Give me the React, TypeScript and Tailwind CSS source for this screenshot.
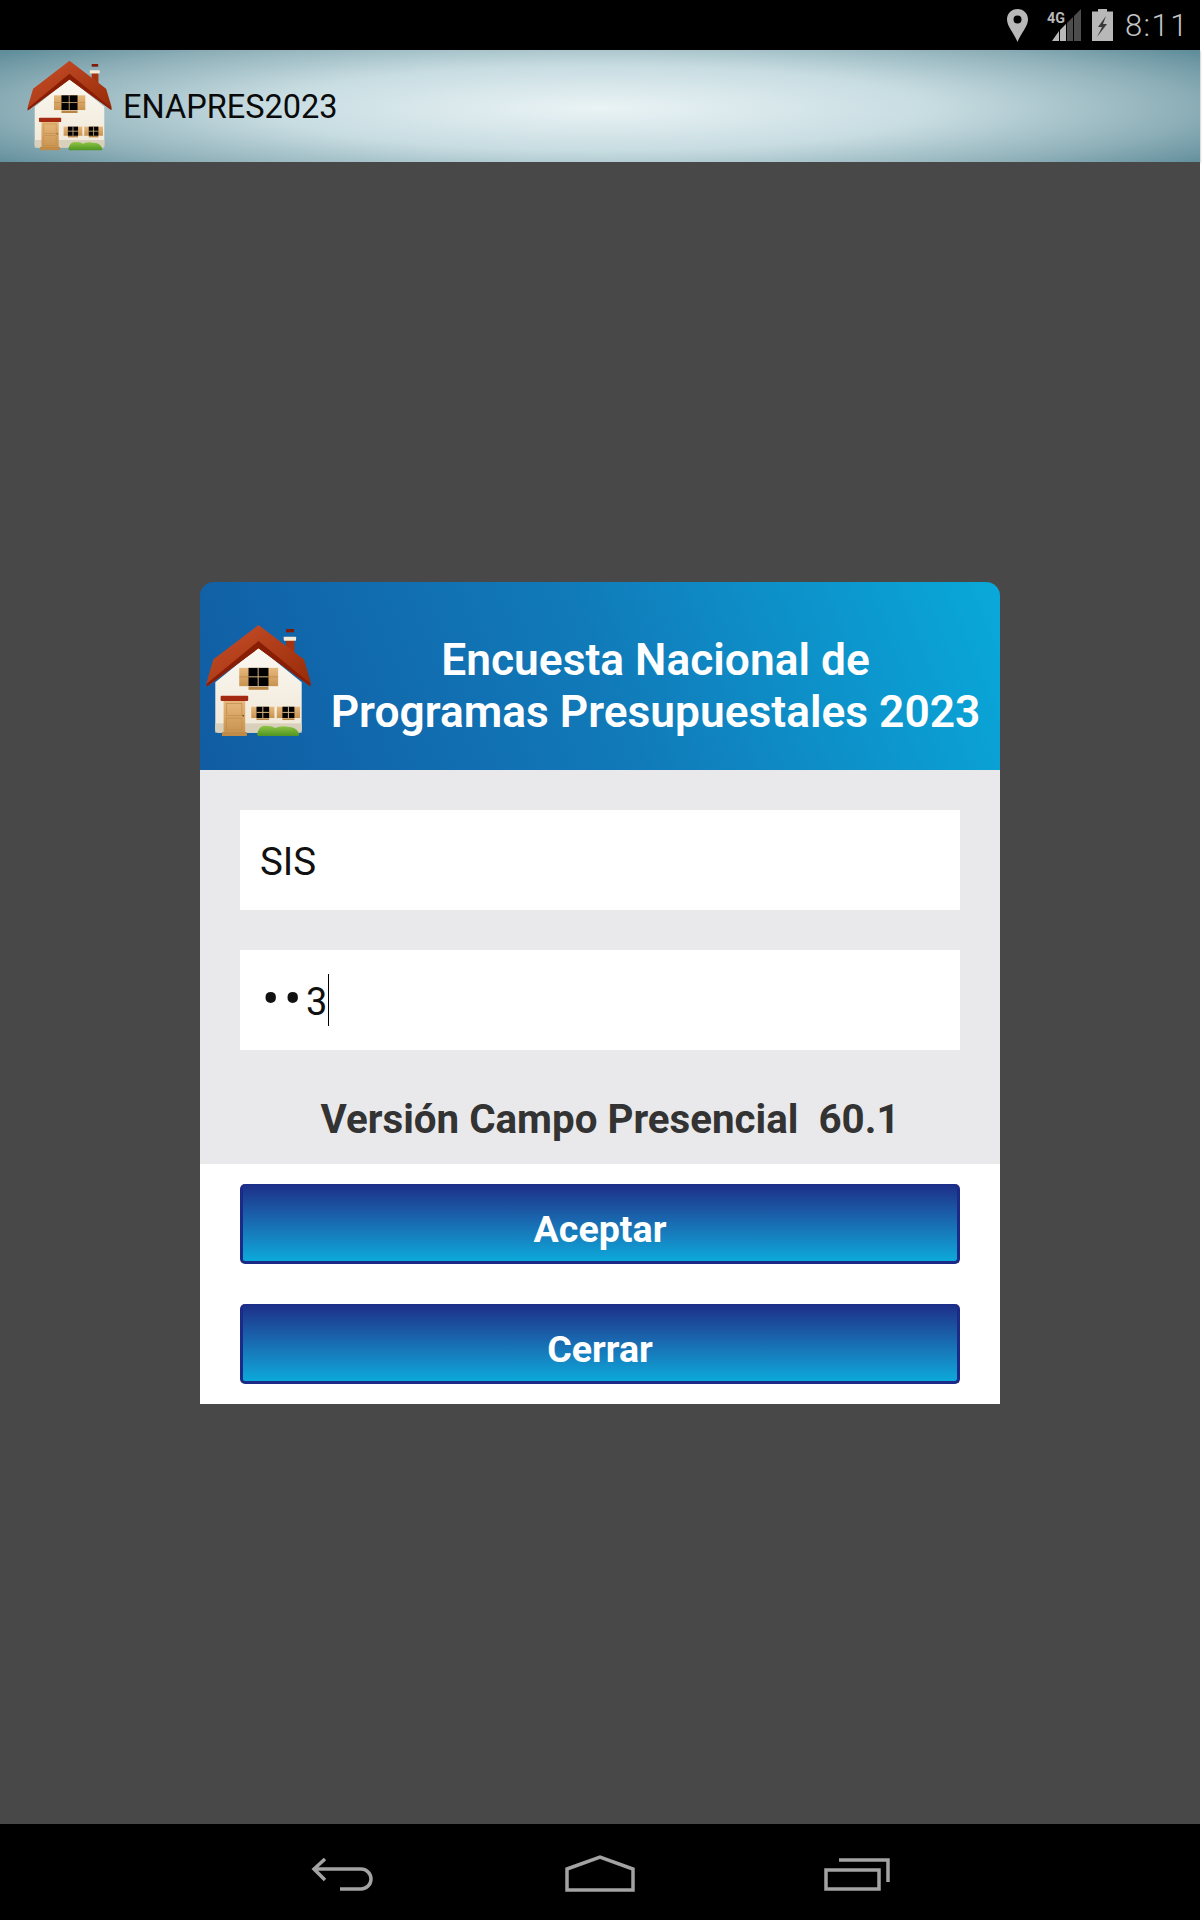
function House({ className }: { className: string }) {
  return (
    <svg viewBox="50 165 316 340" className={className}>
      <defs>
        <linearGradient id="roof" x1="0" y1="0" x2="1" y2="1">
          <stop offset="0" stopColor="#c9502a" />
          <stop offset="1" stopColor="#962a08" />
        </linearGradient>
        <linearGradient id="wall" x1="0" y1="0" x2="0" y2="1">
          <stop offset="0" stopColor="#fbf8f1" />
          <stop offset="1" stopColor="#f0e8d8" />
        </linearGradient>
        <linearGradient id="wood" x1="0" y1="0" x2="0" y2="1">
          <stop offset="0" stopColor="#e6b87c" />
          <stop offset="1" stopColor="#c99350" />
        </linearGradient>
        <linearGradient id="bush" x1="0" y1="0" x2="0" y2="1">
          <stop offset="0" stopColor="#8fc544" />
          <stop offset="1" stopColor="#4f9422" />
        </linearGradient>
      </defs>
      <rect x="291" y="210" width="25" height="50" fill="#a5330f" />
      <rect x="291" y="180" width="24" height="10" fill="#7f1c08" />
      <rect x="284" y="203" width="37" height="12" rx="2" fill="#f5ecd8" />
      <path d="M78 340 L208 235 L338 340 V482 Q338 492 328 492 H88 Q78 492 78 482 Z" fill="url(#wall)" />
      <rect x="78" y="464" width="260" height="28" fill="#d9d0bc" />
      <path d="M52 340 L72 272 L208 168 L345 272 L365 340 L364 352 L208 238 L52 354 Z" fill="url(#roof)" />
      <path d="M52 345 L208 216 L365 345 L364 352 L208 238 L52 354 Z" fill="#8a1e05" />
      <rect x="150" y="297" width="117" height="55" fill="url(#wood)" />
      <path d="M150 324 H178 M238 324 H267" stroke="#b98544" strokeWidth="2" />
      <rect x="178" y="297" width="60" height="55" fill="#000" />
      <path d="M207 297 V352 M178 324 H238" stroke="#d8b684" strokeWidth="3" />
      <rect x="178" y="354" width="60" height="9" fill="#b98544" />
      <rect x="186" y="414" width="147" height="34" fill="url(#wood)" />
      <rect x="256" y="414" width="7" height="34" fill="url(#wall)" />
      <rect x="202" y="414" width="38" height="34" fill="#000" />
      <path d="M221 414 V448 M202 431 H240" stroke="#d8b684" strokeWidth="3" />
      <rect x="280" y="414" width="36" height="34" fill="#000" />
      <path d="M298 414 V448 M280 431 H316" stroke="#d8b684" strokeWidth="3" />
      <rect x="202" y="449" width="38" height="5" fill="#b98544" />
      <rect x="280" y="449" width="36" height="5" fill="#b98544" />
      <rect x="103" y="396" width="65" height="96" fill="url(#wood)" />
      <rect x="112" y="404" width="46" height="36" fill="none" stroke="#c08a48" strokeWidth="2" />
      <rect x="112" y="448" width="46" height="36" fill="none" stroke="#c08a48" strokeWidth="2" />
      <circle cx="162" cy="441" r="2.5" fill="#4a3010" />
      <rect x="94" y="381" width="83" height="16" rx="3" fill="#a32a10" />
      <rect x="98" y="490" width="75" height="12" fill="#c08a48" />
      <path d="M204 494 Q212 468 232 472 Q248 470 258 478 Q276 470 296 474 Q322 474 330 494 V500 Q330 502 326 502 H210 Q204 502 204 498 Z" fill="url(#bush)" />
    </svg>
  )
}

function DialogButton({ label }: { label: string }) {
  return (
    <button className="h-20 w-full rounded-[5px] border-[3px] border-t-0 border-[#1a2a86] bg-gradient-to-b from-[#1c2d88] to-[#0aa9da] pt-3 text-[37.6px] leading-[44px] font-bold text-white">
      {label}
    </button>
  )
}

export default function App() {
  return (
    <div className="h-[1922px] w-[1202px] bg-white font-['Roboto',sans-serif]">
      <div className="flex h-[1920px] w-[1200px] flex-col">
        <div className="flex h-[50px] items-center justify-end bg-black pr-[11px]">
          <svg viewBox="0 0 21 33" className="mr-[19px] h-[33px] w-[21px]">
            <path fillRule="evenodd" d="M10.5 0 C4.5 0 0 4.6 0 10.5 C0 17.5 7 24 10.5 33 C14 24 21 17.5 21 10.5 C21 4.6 16.5 0 10.5 0 Z M10.5 6.5 A4 4 0 1 1 10.5 14.500 A4 4 0 1 1 10.5 6.5 Z" fill="#b8b8b8" />
          </svg>
          <svg viewBox="0 0 34 33" className="mr-[11px] h-[33px] w-[34px]">
            <text x="0" y="14" fontFamily="Roboto, sans-serif" fontSize="15" fontWeight="700" fill="#b8b8b8" textLength="18" lengthAdjust="spacingAndGlyphs">4G</text>
            <path d="M34 0 V32 H27 V7 Z" fill="#4c4c4c" />
            <path d="M26 8 V32 H20 V14 Z" fill="#4c4c4c" />
            <path d="M19 15 V32 H13 V21 Z" fill="#b8b8b8" />
            <path d="M12 22 V32 H5 Z" fill="#b8b8b8" />
          </svg>
          <svg viewBox="0 0 21 32" className="mr-[12px] h-8 w-[21px]">
            <path d="M6 0 H15 V2.500 H21 V32 H0 V2.500 H6 Z" fill="#b8b8b8" />
            <path d="M14 7 L6 18 H10 L5 28 L15 15 H11 Z" fill="#3a3a3a" />
          </svg>
          <span className="text-[31px] leading-none font-light tracking-[1.5px] text-[#c4c4c4]">8:11</span>
        </div>
        <div className="flex h-[112px] items-center bg-[#5f8d9a] bg-[radial-gradient(ellipse_62%_85%_at_50%_52%,#eaf3f5_0%,#c7dce1_45%,#8fb0b9_78%,#5f8d9a_100%)] pl-[27px] shadow-[0_1px_2px_rgba(0,0,0,0.4)]">
          <House className="mb-0.5 h-[91px] w-[85px]" />
          <span className="ml-[11px] pt-0.5 text-[32.5px] text-[#0a0a0a]">ENAPRES2023</span>
        </div>
        <main className="flex flex-1 items-center justify-center bg-[#484848]">
          <div className="flex w-[800px] flex-col overflow-hidden rounded-t-[14px]">
            <div className="flex h-[188px] items-center bg-[linear-gradient(68deg,#115ca3_0%,#117ab9_50%,#09a9da_100%)] pl-1.5">
              <House className="mt-2 h-[113px] w-[105px] shrink-0" />
              <h1 className="flex-1 pt-5 text-center text-[44.3px] leading-[52px] font-semibold text-white">
                Encuesta Nacional de
                <br />
                Programas Presupuestales 2023
              </h1>
            </div>
            <div className="flex h-[394px] flex-col gap-10 bg-[#e9e9eb] px-10 pt-10">
              <div className="flex h-[100px] items-center bg-white pt-1 pl-5 text-[38.5px] text-[#111]">SIS</div>
              <div className="flex h-[100px] items-center bg-white pl-5 text-[38px] text-[#111]">
                <span className="w-[22px] pl-0.5 text-[52px] leading-none">•</span>
                <span className="w-[24px] pl-0.5 text-[52px] leading-none">•</span>
                <span className="pt-1">3</span>
                <span className="ml-px h-[52px] w-px bg-black" />
              </div>
              <p className="pt-1.5 pl-5 text-center text-[40.3px] leading-[48px] font-bold whitespace-pre text-[#333]">Versión Campo Presencial  60.1</p>
            </div>
            <div className="flex flex-col gap-10 bg-white px-10 py-5">
              <DialogButton label="Aceptar" />
              <DialogButton label="Cerrar" />
            </div>
          </div>
        </main>
        <div className="flex h-24 items-start justify-center bg-black">
          <div className="grid w-[770px] grid-cols-3 justify-items-center pt-[31px]">
            <svg viewBox="0 0 64 33" className="mt-[3px] h-[33px] w-16">
              <path d="M14 1 L3 11 L14 22 M3 11 H50 A10 10 0 0 1 50 31 H29" fill="none" stroke="#a3a3a3" strokeWidth="3.5" />
            </svg>
            <svg viewBox="0 0 70 37" className="h-[37px] w-[70px]">
              <path d="M2 14 L35 2 L68 14 V35 H2 Z" fill="none" stroke="#a3a3a3" strokeWidth="3.5" />
            </svg>
            <svg viewBox="0 0 66 33" className="mt-[3px] h-[33px] w-[66px]">
              <path d="M15 2 H64 V24" fill="none" stroke="#a3a3a3" strokeWidth="3.5" />
              <rect x="2" y="12" width="53" height="19" fill="none" stroke="#a3a3a3" strokeWidth="3.5" />
            </svg>
          </div>
        </div>
      </div>
    </div>
  )
}
